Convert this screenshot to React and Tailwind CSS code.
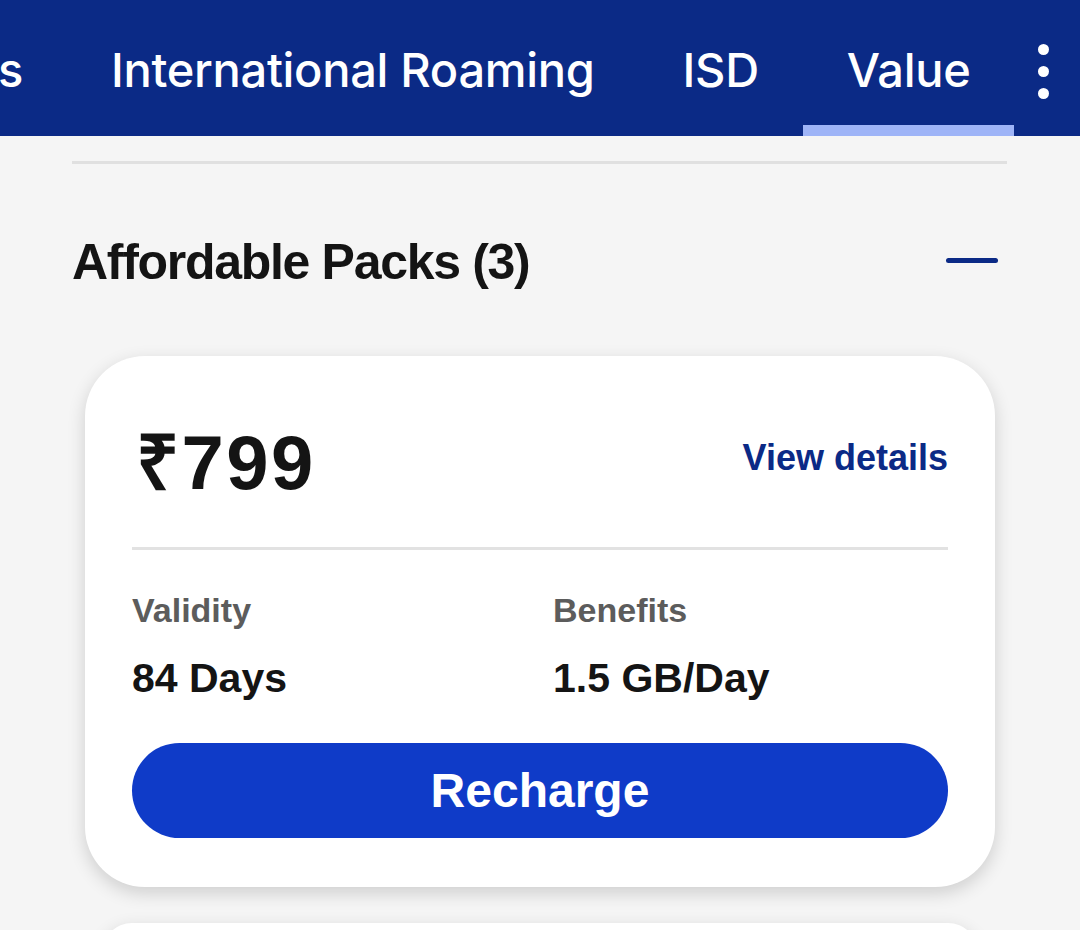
import React from 'react';

const FONT = { fontFamily: '"Liberation Sans", Arial, sans-serif' };
const TAB_FONT = { fontFamily: 'Inter, "Liberation Sans", Arial, sans-serif' };

const TABS = [
  { label: 's', active: false },
  { label: 'International Roaming', active: false },
  { label: 'ISD', active: false },
  { label: 'Value', active: true },
];

function TabBar() {
  return (
    <div className="h-[136px] bg-[#0b2a86] flex items-stretch relative overflow-hidden">
      <div style={TAB_FONT} className="flex items-stretch ml-[-46px]">
        {TABS.map((t, i) => (
          <div
            key={i}
            className="relative flex items-center px-[44px] pt-[5px] text-[47px] font-medium text-white tracking-[-0.3px]"
          >
            {t.label}
            {t.active && <div className="absolute left-0 right-0 bottom-0 h-[11px] bg-[#9eb4f7]" />}
          </div>
        ))}
      </div>
      <div className="absolute right-[31px] top-[44px] flex flex-col gap-[11px]">
        <span className="w-[11px] h-[11px] rounded-full bg-white" />
        <span className="w-[11px] h-[11px] rounded-full bg-white" />
        <span className="w-[11px] h-[11px] rounded-full bg-white" />
      </div>
    </div>
  );
}

function PackCard({ price, validity, benefits }) {
  return (
    <div className="bg-white rounded-[60px] mx-[13px] px-[47px] pt-[69px] pb-[49px] shadow-[0_6px_18px_rgba(0,0,0,0.16)]">
      <div className="flex justify-between items-center">
        <span className="text-[76px] font-bold leading-none text-[#141414] ml-[4px] tracking-[2.5px]">{price}</span>
        <span className="text-[36px] font-bold text-[#0b2a86] mt-[-10px]">View details</span>
      </div>
      <div className="h-[3px] bg-[#e2e2e2] mt-[46px]" />
      <div className="grid grid-cols-[421px_1fr] mt-[40px]">
        <div>
          <div className="text-[34px] font-bold text-[#5c5c5c] leading-[40px]">Validity</div>
          <div className="text-[41px] font-bold text-[#141414] mt-[25px] leading-[46px]">{validity}</div>
        </div>
        <div>
          <div className="text-[34px] font-bold text-[#5c5c5c] leading-[40px]">Benefits</div>
          <div className="text-[41px] font-bold text-[#141414] mt-[25px] leading-[46px]">{benefits}</div>
        </div>
      </div>
      <button className="mt-[42px] w-full h-[95px] rounded-full bg-[#0f3bc8] text-white text-[48px] font-bold">
        Recharge
      </button>
    </div>
  );
}

export default function App() {
  return (
    <div style={FONT} className="w-[1080px] h-[930px] bg-[#f5f5f5] overflow-hidden">
      <TabBar />
      <div className="px-[72px] pr-[73px]">
        <div className="h-[3px] bg-[#e0e0e0] mt-[25px]" />
        <div className="flex items-center justify-between mt-[68px]">
          <h2 className="text-[50px] leading-[60px] font-bold text-[#141414] tracking-[-1.3px]">Affordable Packs (3)</h2>
          <span className="w-[52px] h-[5px] rounded-full bg-[#0b2a86] mr-[9px] mt-[-4px]" />
        </div>
      </div>
      <div className="px-[72px] mt-[64px]">
        <PackCard price="₹799" validity="84 Days" benefits="1.5 GB/Day" />
        <div className="bg-white rounded-[60px] mx-[30px] h-[60px] mt-[36px] shadow-[0_6px_18px_rgba(0,0,0,0.16)]" />
      </div>
    </div>
  );
}
